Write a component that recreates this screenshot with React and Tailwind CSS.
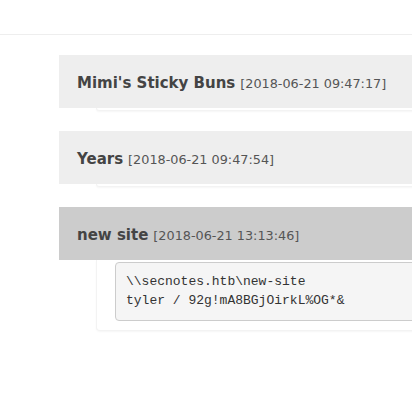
import React from 'react';

const notes = [
  { title: "Mimi's Sticky Buns", date: '2018-06-21 09:47:17' },
  { title: 'Years', date: '2018-06-21 09:47:54' },
  {
    title: 'new site',
    date: '2018-06-21 13:13:46',
    open: true,
    body: '\\\\secnotes.htb\\new-site\ntyler / 92g!mA8BGjOirkL%OG*&',
  },
];

function Note({ note }) {
  return (
    <div className="mb-[20px]">
      <div
        className={`h-[53px] px-[18px] flex items-baseline pt-[18px] gap-[5px] text-[#444] ${
          note.open ? 'bg-[#cccccc]' : 'bg-[#eeeeee]'
        }`}
      >
        <span className="text-[15px] leading-[20px] font-bold">{note.title}</span>
        <span className="text-[12.8px] leading-[20px] text-[#555]">[{note.date}]</span>
      </div>
      <div className="ml-[37px] rounded-b-[4px] bg-white shadow-[0_1px_2px_rgba(0,0,0,0.04)] border border-[#f3f3f3] border-t-0">
        {note.open ? (
          <div className="pl-[18px] pt-[2px] pb-[9px]">
            <pre className="m-0 rounded-[4px] border border-[#cccccc] bg-[#f5f5f5] px-[10px] pt-[10px] pb-[10px] font-['Liberation_Mono',monospace] text-[13px] leading-[18.5px] text-[#333] whitespace-pre">
              {note.body}
            </pre>
          </div>
        ) : (
          <div className="h-[2px]" />
        )}
      </div>
    </div>
  );
}

export default function App() {
  return (
    <div className="w-[412px] h-[394px] overflow-hidden bg-white font-['DejaVu_Sans',sans-serif]">
      <div className="h-[35px] border-b border-[#eeeeee]" />
      <div className="pt-[20px] pl-[59px] w-[520px]">
        {notes.map((n) => (
          <Note key={n.date} note={n} />
        ))}
      </div>
    </div>
  );
}
